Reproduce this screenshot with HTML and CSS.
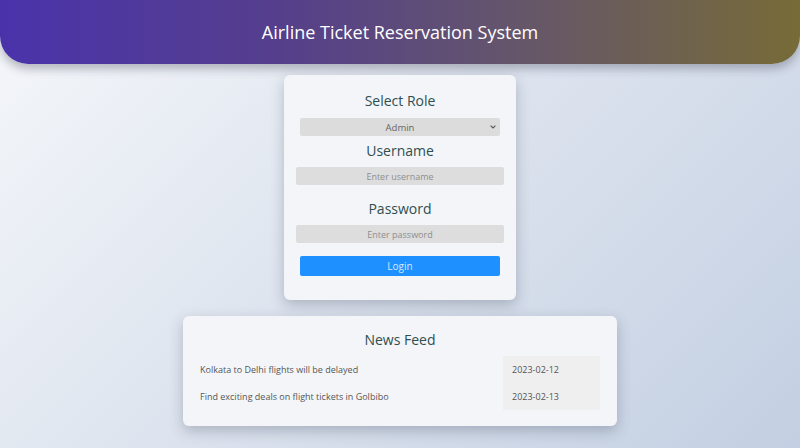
FILE: index.html
```html
<!DOCTYPE html>
<html lang="en">
<head>
<meta charset="utf-8">
<title>Airline Ticket Reservation System</title>
<link rel="stylesheet" href="styles.css">
</head>
<body>
<header class="topbar">
  <h1 class="title">Airline Ticket Reservation System</h1>
</header>
<main class="content">
  <form class="login-card">
    <h3 class="label label-role">Select Role</h3>
    <div class="select-wrap">
      <select class="role-select">
        <option>Admin</option>
        <option>User</option>
      </select>
      <svg class="select-arrow" width="6" height="4" viewBox="0 0 6 4"><path d="M0.6 0.6 L3 3 L5.4 0.6" fill="none" stroke="#555" stroke-width="1.1"/></svg>
    </div>
    <h3 class="label label-user">Username</h3>
    <input class="field" type="text" placeholder="Enter username">
    <h3 class="label label-pass">Password</h3>
    <input class="field" type="password" placeholder="Enter password">
    <button class="login-btn" type="button">Login</button>
  </form>
  <section class="news-card">
    <h3 class="label news-title">News Feed</h3>
    <table class="news-table">
      <tr><td class="news-text">Kolkata to Delhi flights will be delayed</td><td class="news-date">2023-02-12</td></tr>
      <tr><td class="news-text">Find exciting deals on flight tickets in Golbibo</td><td class="news-date">2023-02-13</td></tr>
    </table>
  </section>
</main>
</body>
</html>
```
FILE: styles.css
```css
* { box-sizing: border-box; }
html, body { margin: 0; padding: 0; }
body {
  min-height: 100vh;
  font-family: "Open Sans", "DejaVu Sans", sans-serif;
  background: linear-gradient(135deg, #f5f7fa 0%, #c3cfe2 100%);
  overflow: hidden;
}
.topbar {
  height: 64px;
  display: flex;
  align-items: center;
  justify-content: center;
  background: linear-gradient(to right, #4a33aa 0%, #553f8c 35%, #65566a 65%, #776b38 100%);
  border-radius: 0 0 28px 28px;
  box-shadow: 0 5px 10px rgba(40, 40, 60, 0.3);
}
.title {
  margin: 0;
  color: #ffffff;
  font-size: 18px;
  font-weight: 500;
  line-height: 24px;
}
.content {
  display: flex;
  flex-direction: column;
  align-items: center;
  padding-top: 11px;
  gap: 16px;
}
.login-card {
  width: 232px;
  height: 225px;
  margin: 0;
  padding: 17px 16px 0;
  display: flex;
  flex-direction: column;
  align-items: center;
  background: #f3f5f9;
  border-radius: 6px;
  box-shadow: 0 5px 14px rgba(60, 70, 90, 0.3);
}
.label {
  margin: 0;
  height: 18px;
  line-height: 18px;
  font-size: 14px;
  font-weight: 500;
  color: #2f4f4f;
  text-align: center;
}
.select-wrap {
  position: relative;
  margin-top: 8px;
  width: 200px;
  height: 18px;
}
.role-select {
  appearance: none;
  -webkit-appearance: none;
  display: block;
  width: 200px;
  height: 18px;
  border: none;
  border-radius: 2px;
  background: #dcdcdc;
  color: #666;
  font-family: inherit;
  font-size: 9.5px;
  text-align: center;
  text-align-last: center;
  padding: 0;
}
.select-arrow {
  position: absolute;
  right: 4px;
  top: 7px;
  pointer-events: none;
}
.label-user { margin-top: 6px; }
.label-pass { margin-top: 15px; }
.field {
  margin-top: 7px;
  width: 208px;
  flex: none;
  height: 18px;
  border: none;
  border-radius: 2px;
  background: #dddddd;
  font-family: inherit;
  font-size: 9px;
  text-align: center;
  padding: 0 4px;
  color: #444;
}
.field::placeholder { color: #8e8e8e; }
.login-btn {
  margin-top: 13px;
  width: 200px;
  height: 20px;
  border: none;
  border-radius: 2px;
  background: #1e90ff;
  color: #d6e9ff;
  font-family: inherit;
  font-size: 10px;
  padding: 0;
}
.news-card {
  width: 434px;
  height: 110px;
  padding: 15px 17px 0;
  background: #f3f5f9;
  border-radius: 6px;
  box-shadow: 0 5px 14px rgba(60, 70, 90, 0.3);
}
.news-title { display: block; }
.news-table {
  margin-top: 7px;
  width: 400px;
  border-collapse: collapse;
}
.news-table td {
  height: 27px;
  padding: 0;
  font-size: 9px;
  color: #555;
}
.news-date {
  width: 97px;
  padding-left: 9px !important;
  background: #efefef;
}
```
